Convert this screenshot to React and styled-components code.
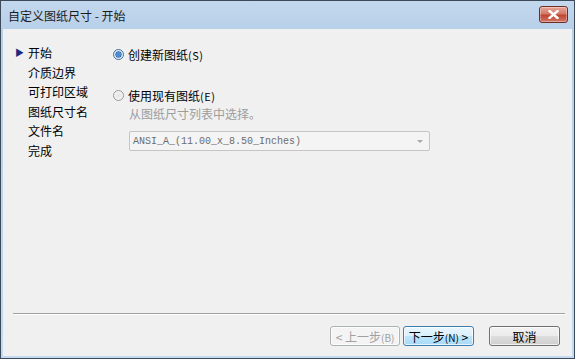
import React from 'react';
import styled, { createGlobalStyle } from 'styled-components';

const Global = createGlobalStyle`
  html, body { margin: 0; padding: 0; background: #bcd4ec; }
  body { width: 575px; height: 359px; overflow: hidden; font-family: "Noto Sans CJK SC", "Liberation Sans", sans-serif; }
`;

const Window = styled.div`
  box-sizing: border-box;
  width: 575px; height: 359px;
  display: flex; flex-direction: column;
  border: 1px solid #3c4a5a;
  background: linear-gradient(#c3d8ee, #b7cfe8 30px, #c4daf0);
`;

const TitleBar = styled.div`
  height: 28px; flex-shrink: 0;
  display: flex; align-items: center; justify-content: space-between;
  padding: 0 6px 0 7px;
  font-size: 12px; color: #1b1b1b;
`;

const CloseBtn = styled.div`
  width: 29px; height: 17px; margin-top: -2px;
  box-sizing: border-box;
  border: 1px solid #6e2e26; border-radius: 3px;
  background: linear-gradient(#e8a696, #d27a68 45%, #c0452f 55%, #d1786a);
  box-shadow: inset 0 0 0 1px rgba(255,255,255,.35);
  display: flex; align-items: center; justify-content: center;
`;

const Client = styled.div`
  flex: 1;
  margin: 0 2px 2px;
  background: #f0f0f0;
  display: flex; flex-direction: column;
`;

const Body = styled.div`
  flex: 1;
  display: flex;
  padding: 16px 0 0 10px;
`;

const Nav = styled.ul`
  list-style: none; margin: -2px 0 0; padding: 0;
  width: 100px;
`;

const NavItem = styled.li`
  position: relative;
  height: 19.5px; line-height: 19.5px;
  padding-left: 15px;
  font-size: 12px; color: #000;
`;

const Arrow = styled.span`
  position: absolute; left: 2px; top: 0;
  font-size: 9px; color: #1e2a80;
`;

const Main = styled.div`
  display: flex; flex-direction: column;
`;

const Option = styled.label`
  display: flex; align-items: center; gap: 4px;
  height: 19px;
  font-size: 12px; color: #000;
  margin-bottom: ${({ $gap }) => $gap || 0}px;
  .key { font-size: 11px; letter-spacing: 0.5px; }
`;

const Radio = styled.span`
  width: 11px; height: 11px; border-radius: 50%;
  box-sizing: border-box;
  border: 1px solid ${({ $on }) => ($on ? '#3f6f9e' : '#9a9a9a')};
  background: ${({ $on }) => ($on ? 'radial-gradient(circle, #4b8fd0 0 2.2px, #2a5d96 2.8px, #d8e8f6 3.4px, #f4f8fc 100%)' : 'radial-gradient(circle, #e3e3e3, #fbfbfb)')};
`;

const Hint = styled.div`
  margin-left: 16px;
  font-size: 12px; color: #9d9d9d;
  height: 17px; line-height: 17px;
`;

const Combo = styled.div`
  margin: 9px 0 0 16px;
  width: 301px; height: 20px;
  box-sizing: border-box;
  border: 1px solid #c5c5c5; border-radius: 2px;
  background: #f4f4f4;
  display: flex; align-items: center; justify-content: space-between;
  padding: 0 6px 0 3px;
  font-family: "Liberation Mono", monospace; font-size: 10px; color: #6d6d6d;
`;

const Caret = styled.span`
  width: 0; height: 0;
  border-left: 3px solid transparent; border-right: 3px solid transparent;
  border-top: 3px solid #a8a8a8;
`;

const Footer = styled.div`
  flex-shrink: 0;
  padding: 0 7px 10px 10px;
`;

const Separator = styled.div`
  height: 0;
  border-top: 1px solid #a0a0a0;
  border-bottom: 1px solid #ffffff;
  margin-bottom: 11px;
`;

const Buttons = styled.div`
  display: flex; justify-content: flex-end; align-items: center;
  padding-right: 5px;
`;

const Button = styled.button`
  box-sizing: border-box;
  width: ${({ $w }) => $w || 71}px; height: 20px;
  margin-left: ${({ $ml }) => $ml || 0}px;
  padding: 0;
  border-radius: 3px;
  font-family: "Noto Sans CJK SC", sans-serif; font-size: 12px;
  .key { font-size: 10px; }
  border: 1px solid ${({ $variant }) => ($variant === 'hot' ? '#3c7fb1' : $variant === 'off' ? '#adb2b5' : '#707070')};
  color: ${({ $variant }) => ($variant === 'off' ? '#a0a0a0' : '#000')};
  background: ${({ $variant }) => ($variant === 'hot'
    ? 'linear-gradient(#eaf6fd, #d9f0fc 50%, #bee6fd 50%, #a7d9f5)'
    : $variant === 'off' ? '#f4f4f4'
    : 'linear-gradient(#f2f2f2, #ebebeb 50%, #dddddd 50%, #cfcfcf)')};
  box-shadow: inset 0 0 0 1px rgba(255,255,255,.7);
`;

const navItems = ['开始', '介质边界', '可打印区域', '图纸尺寸名', '文件名', '完成'];

export default function App() {
  return (
    <>
      <Global />
      <Window>
        <TitleBar>
          <span>自定义图纸尺寸 - 开始</span>
          <CloseBtn>
            <svg width="11" height="9" viewBox="0 0 11 9">
              <path d="M1.5 1 L9.5 8 M9.5 1 L1.5 8" stroke="#fff" strokeWidth="2.4" strokeLinecap="square" />
            </svg>
          </CloseBtn>
        </TitleBar>
        <Client>
          <Body>
            <Nav>
              {navItems.map((t, i) => (
                <NavItem key={t}>
                  {i === 0 && <Arrow>▶</Arrow>}
                  {t}
                </NavItem>
              ))}
            </Nav>
            <Main>
              <Option $gap={22}>
                <Radio $on />
                <span>创建新图纸<span className="key">(S)</span></span>
              </Option>
              <Option>
                <Radio />
                <span>使用现有图纸<span className="key">(E)</span></span>
              </Option>
              <Hint>从图纸尺寸列表中选择。</Hint>
              <Combo>
                <span>ANSI_A_(11.00_x_8.50_Inches)</span>
                <Caret />
              </Combo>
            </Main>
          </Body>
          <Footer>
            <Separator />
            <Buttons>
              <Button $variant="off" $w={70}>&lt; 上一步<span className="key">(B)</span></Button>
              <Button $variant="hot" $ml={3}>下一步<span className="key">(N)</span> &gt;</Button>
              <Button $ml={15}>取消</Button>
            </Buttons>
          </Footer>
        </Client>
      </Window>
    </>
  );
}
